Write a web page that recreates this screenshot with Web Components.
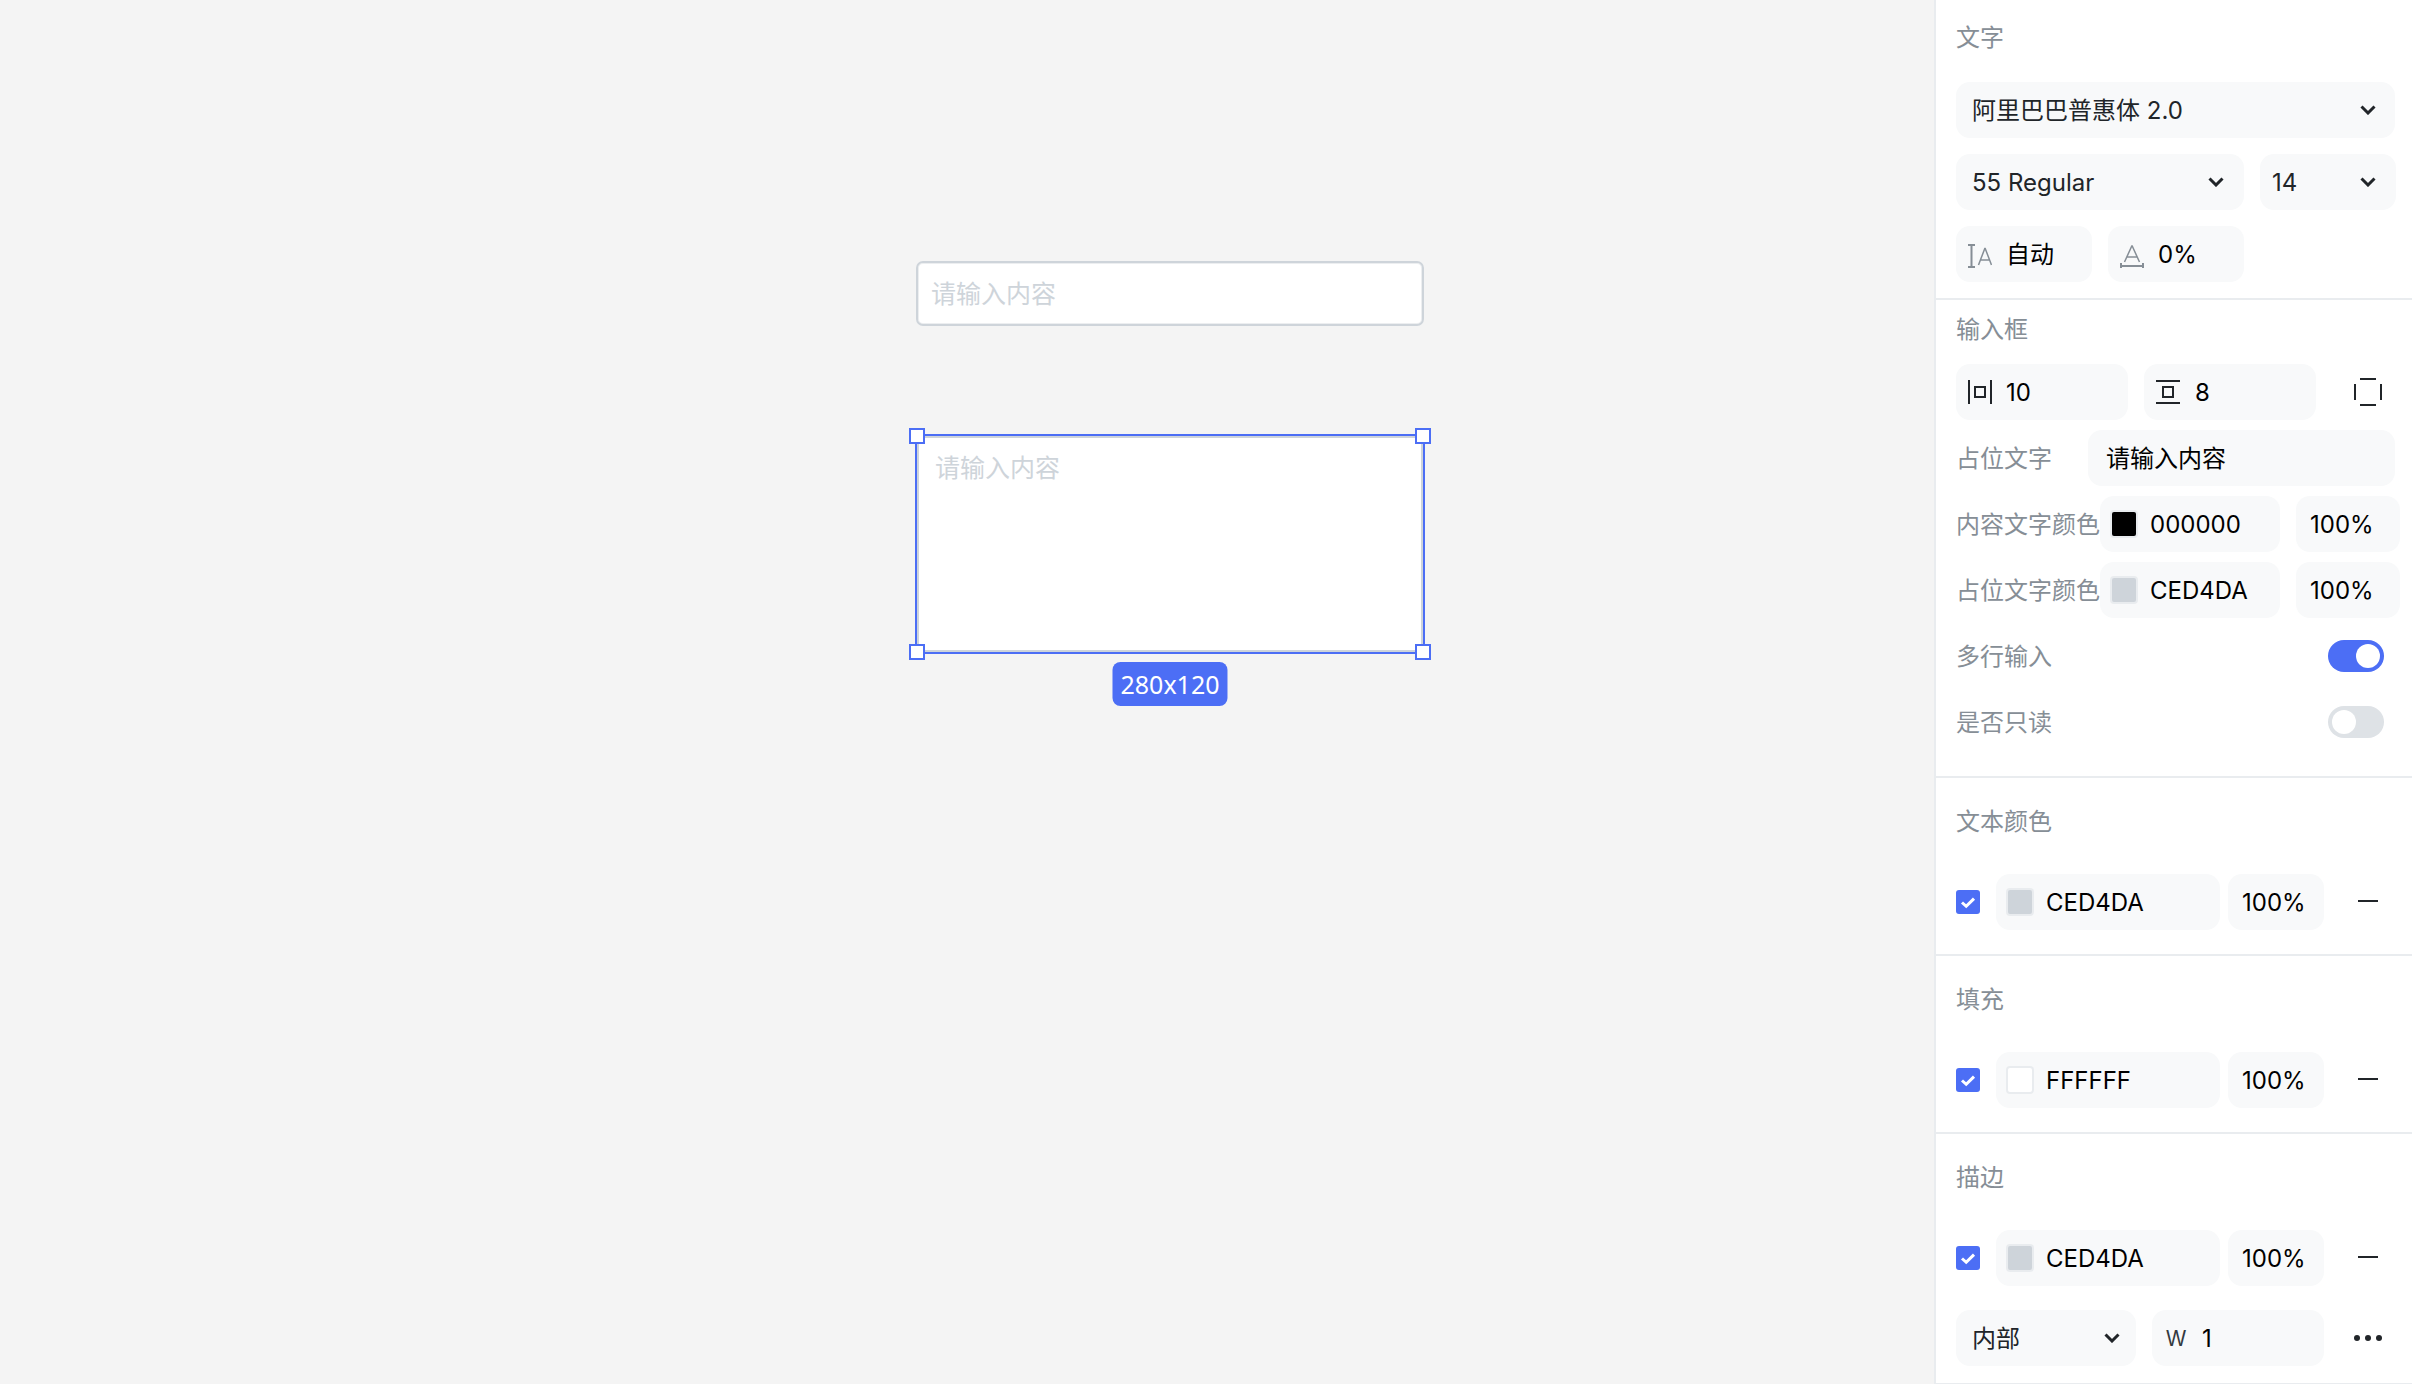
<!DOCTYPE html>
<html lang="zh">
<head>
<meta charset="utf-8">
<title>输入框</title>
<style>
  html, body { margin: 0; height: 100%; overflow: hidden; }
  body { font-family: Inter, "Noto Sans CJK SC", sans-serif; font-size: 24px; color: #212529; }
</style>
</head>
<body>
<ed-app>
  <ed-canvas slot="canvas">
    <ed-node x="916" y="261" w="508" h="65" pad-x="13" pad-y="0" center>请输入内容</ed-node>
    <ed-node x="917" y="436" w="506" h="216" pad-x="16" pad-y="13" selected size="280x120">请输入内容</ed-node>
  </ed-canvas>

  <ed-panel slot="panel">
    <ed-section heading="文字" top="20" under="28" bottom="16">
      <ed-select>阿里巴巴普惠体 2.0</ed-select>
      <ed-row>
        <ed-select style="width:288px" right="20">55 Regular</ed-select>
        <ed-select style="width:136px" pad="12" right="20">14</ed-select>
      </ed-row>
      <ed-row>
        <ed-field style="width:136px" gap="14">
          <svg slot="icon" width="24" height="28" viewBox="0 0 24 28" fill="none" stroke="#868e96" stroke-width="2"><path d="M0 5h7M0 27h7M3.5 5v22"/><path stroke-width="1.5" d="M10.5 25L16.8 8.5h.4L23.5 25M12.7 20h8.6"/></svg>
          自动
        </ed-field>
        <ed-field style="width:136px" gap="14">
          <svg slot="icon" width="24" height="28" viewBox="0 0 24 28" fill="none" stroke="#868e96" stroke-width="2"><path stroke-width="1.5" d="M4.5 22L11.8 6h.4L19.5 22M7 17h10"/><path d="M1 26h22M1 23v5M23 23v5"/></svg>
          0%
        </ed-field>
      </ed-row>
    </ed-section>

    <ed-section heading="输入框" top="12" under="18" bottom="26" gap="10">
      <ed-row>
        <ed-field style="width:172px" gap="14">
          <svg slot="icon" width="24" height="24" viewBox="0 0 24 24" fill="none" stroke="#212529" stroke-width="2"><path d="M1 0v24M23 0v24"/><rect x="7" y="7" width="10" height="10"/></svg>
          10
        </ed-field>
        <ed-field style="width:172px" gap="15">
          <svg slot="icon" width="24" height="24" viewBox="0 0 24 24" fill="none" stroke="#212529" stroke-width="2"><path d="M0 1h24M0 23h24"/><rect x="7" y="7" width="10" height="10"/></svg>
          8
        </ed-field>
        <ed-iconbtn style="margin-left:22px">
          <svg width="28" height="28" viewBox="0 0 28 28" fill="none" stroke="#212529" stroke-width="2"><path d="M6 1h16M6 27h16M1 6v16M27 6v16"/></svg>
        </ed-iconbtn>
      </ed-row>
      <ed-prop label="占位文字" label-width="132">
        <ed-field style="flex:1" pad="18">请输入内容</ed-field>
      </ed-prop>
      <ed-prop label="内容文字颜色" label-width="144">
        <ed-color style="width:180px" color="#000000">000000</ed-color>
        <ed-field style="width:104px;margin-left:16px" pad="14">100%</ed-field>
      </ed-prop>
      <ed-prop label="占位文字颜色" label-width="144">
        <ed-color style="width:180px" color="#ced4da">CED4DA</ed-color>
        <ed-field style="width:104px;margin-left:16px" pad="14">100%</ed-field>
      </ed-prop>
      <ed-prop label="多行输入" spread><ed-toggle on></ed-toggle></ed-prop>
      <ed-prop label="是否只读" spread><ed-toggle></ed-toggle></ed-prop>
    </ed-section>

    <ed-section heading="文本颜色" top="26" under="36" bottom="24">
      <ed-paint color="#ced4da" value="CED4DA"></ed-paint>
    </ed-section>
    <ed-section heading="填充" top="26" under="36" bottom="24">
      <ed-paint color="#ffffff" value="FFFFFF"></ed-paint>
    </ed-section>
    <ed-section heading="描边" top="26" under="36" bottom="17" gap="24">
      <ed-paint color="#ced4da" value="CED4DA"></ed-paint>
      <ed-row>
        <ed-select style="width:180px" right="16">内部</ed-select>
        <ed-field style="width:172px" gap="14">
          <span slot="icon" style="display:block;width:24px;text-align:center;font-size:21px;padding-top:2px;color:#343a40">W</span>
          1
        </ed-field>
        <ed-iconbtn style="margin-left:14px">
          <svg width="28" height="8" viewBox="0 0 28 8" fill="#212529"><circle cx="3" cy="4" r="3"/><circle cx="14" cy="4" r="3"/><circle cx="25" cy="4" r="3"/></svg>
        </ed-iconbtn>
      </ed-row>
    </ed-section>
  </ed-panel>
</ed-app>

<script>
// small helper so each element keeps its markup + styles together
function makeEl(name, html, setup) {
  const tpl = document.createElement('template');
  tpl.innerHTML = html;
  customElements.define(name, class extends HTMLElement {
    constructor() {
      super();
      this.attachShadow({ mode: 'open' });
      this.shadowRoot.appendChild(tpl.content.cloneNode(true));
    }
    connectedCallback() {
      if (setup) setup(this, this.shadowRoot);
    }
  });
}

const CHEVRON = `<svg class="chev" width="16" height="10" viewBox="0 0 16 10" fill="none" stroke="#212529" stroke-width="3"><path d="M1.5 1.5L8 8l6.5-6.5"/></svg>`;

makeEl('ed-app', `
  <style>
    :host { display: flex; width: 2412px; height: 1384px; background: #f4f4f4; }
  </style>
  <slot name="canvas"></slot>
  <slot name="panel"></slot>
`);

makeEl('ed-canvas', `
  <style>
    :host { display: block; position: relative; flex: none; width: 1934px; height: 100%; }
  </style>
  <slot></slot>
`);

// nodes sit on a free canvas, so x/y are the content here
makeEl('ed-node', `
  <style>
    :host { display: block; position: absolute; box-sizing: border-box; background: #fff; border: 2px solid #ced4da; border-radius: 7px; color: #ced4da; font-size: 25px; line-height: 34px; box-shadow: inset 0 0 0 1px #eceef0; }
    :host([selected]) { border-radius: 0; box-shadow: none; }
    :host([center]) .txt { height: 100%; display: flex; align-items: center; }
    .frame { position: absolute; inset: -4px; border: 2px solid #4c6ef5; }
    .h { position: absolute; box-sizing: border-box; width: 16px; height: 16px; background: #fff; border: 2px solid #4c6ef5; }
    .tl { left: -10px; top: -10px; } .tr { right: -10px; top: -10px; }
    .bl { left: -10px; bottom: -10px; } .br { right: -10px; bottom: -10px; }
    .size { position: absolute; left: 50%; top: calc(100% + 12px); transform: translateX(-50%); height: 44px; line-height: 44px; padding: 0 8px; border-radius: 8px; background: #4c6ef5; color: #fff; font-family: "Noto Sans", sans-serif; font-size: 25px; white-space: nowrap; }
  </style>
  <div class="txt"><slot></slot></div>
`, (el, root) => {
  el.style.left = el.getAttribute('x') + 'px';
  el.style.top = el.getAttribute('y') + 'px';
  el.style.width = el.getAttribute('w') + 'px';
  el.style.height = el.getAttribute('h') + 'px';
  const txt = root.querySelector('.txt');
  txt.style.padding = el.getAttribute('pad-y') + 'px ' + el.getAttribute('pad-x') + 'px';
  txt.style.boxSizing = 'border-box';
  if (el.hasAttribute('selected')) {
    root.innerHTML += `<div class="frame"></div>
      <div class="h tl"></div><div class="h tr"></div><div class="h bl"></div><div class="h br"></div>
      <div class="size">${el.getAttribute('size')}</div>`;
  }
});

makeEl('ed-panel', `
  <style>
    :host { display: flex; flex-direction: column; flex: none; box-sizing: border-box; width: 478px; height: 100%; background: #fff; border-left: 2px solid #e9ecef; }
  </style>
  <slot></slot>
`);

makeEl('ed-section', `
  <style>
    :host { display: block; box-sizing: border-box; padding-left: 20px; padding-right: 17px; border-bottom: 2px solid #e9ecef; }
    .title { box-sizing: border-box; height: 34px; padding-top: 1px; line-height: 34px; color: #868e96; font-size: 24px; }
    .body { display: flex; flex-direction: column; gap: var(--gap, 16px); }
  </style>
  <div class="title"></div>
  <div class="body"><slot></slot></div>
`, (el, root) => {
  const title = root.querySelector('.title');
  title.textContent = el.getAttribute('heading');
  title.style.marginBottom = el.getAttribute('under') + 'px';
  el.style.paddingTop = el.getAttribute('top') + 'px';
  el.style.paddingBottom = el.getAttribute('bottom') + 'px';
  if (el.hasAttribute('gap')) el.style.setProperty('--gap', el.getAttribute('gap') + 'px');
});

makeEl('ed-row', `
  <style>
    :host { display: flex; align-items: center; gap: 16px; height: 56px; }
  </style>
  <slot></slot>
`);

makeEl('ed-select', `
  <style>
    :host { display: flex; align-items: center; justify-content: space-between; box-sizing: border-box; height: 56px; padding: 0 19px 0 16px; background: #f8f9fa; border-radius: 14px; flex: none; line-height: 34px; color: #212529; white-space: nowrap; }
    span { padding-top: 2px; }
    .chev { display: block; flex: none; }
  </style>
  <span><slot></slot></span>
  ${CHEVRON}
`, (el) => {
  if (el.hasAttribute('pad')) el.style.paddingLeft = el.getAttribute('pad') + 'px';
  if (el.hasAttribute('right')) el.style.paddingRight = el.getAttribute('right') + 'px';
});

makeEl('ed-field', `
  <style>
    :host { display: flex; align-items: center; gap: 12px; box-sizing: border-box; height: 56px; padding: 0 12px; background: #f8f9fa; border-radius: 14px; flex: none; line-height: 34px; color: #000; white-space: nowrap; }
    .val { padding-top: 2px; }
    ::slotted(svg) { display: block; flex: none; }
  </style>
  <slot name="icon"></slot>
  <span class="val"><slot></slot></span>
`, (el) => {
  if (el.hasAttribute('pad')) el.style.paddingLeft = el.getAttribute('pad') + 'px';
  if (el.hasAttribute('gap')) el.style.gap = el.getAttribute('gap') + 'px';
});

makeEl('ed-color', `
  <style>
    :host { display: flex; align-items: center; gap: 12px; box-sizing: border-box; height: 56px; padding: 0 10px; background: #f8f9fa; border-radius: 14px; flex: none; line-height: 34px; color: #000; }
    .sw { box-sizing: border-box; width: 28px; height: 28px; border: 2px solid #e9ecef; border-radius: 4px; flex: none; }
    .val { padding-top: 2px; }
  </style>
  <div class="sw"></div>
  <span class="val"><slot></slot></span>
`, (el, root) => {
  root.querySelector('.sw').style.background = el.getAttribute('color');
});

makeEl('ed-iconbtn', `
  <style>
    :host { display: flex; align-items: center; justify-content: center; width: 28px; flex: none; }
    ::slotted(svg) { display: block; }
  </style>
  <slot></slot>
`);

makeEl('ed-prop', `
  <style>
    :host { display: flex; align-items: center; height: 56px; }
    :host([spread]) { justify-content: space-between; padding-right: 11px; }
    .lbl { box-sizing: border-box; padding-top: 2px; color: #868e96; line-height: 34px; flex: none; white-space: nowrap; }
  </style>
  <div class="lbl"></div>
  <slot></slot>
`, (el, root) => {
  const lbl = root.querySelector('.lbl');
  lbl.textContent = el.getAttribute('label');
  if (el.hasAttribute('label-width')) lbl.style.width = el.getAttribute('label-width') + 'px';
});

makeEl('ed-toggle', `
  <style>
    :host { display: block; box-sizing: border-box; width: 56px; height: 32px; padding: 4px; border-radius: 16px; background: #dee2e6; }
    :host([on]) { background: #4c6ef5; }
    .knob { width: 24px; height: 24px; border-radius: 50%; background: #fff; }
    :host([on]) .knob { margin-left: 24px; }
  </style>
  <div class="knob"></div>
`);

makeEl('ed-paint', `
  <style>
    :host { display: flex; align-items: center; height: 56px; }
    .check { display: block; flex: none; margin-right: 16px; }
    .pct { width: 96px; margin-left: 8px; }
    .minus { display: block; flex: none; margin: -2px 0 0 34px; }
  </style>
  <svg class="check" width="24" height="24" viewBox="0 0 24 24"><rect width="24" height="24" rx="3" fill="#4c6ef5"/><path d="M6 12.5l4.2 3.8L18 8.6" fill="none" stroke="#fff" stroke-width="3"/></svg>
  <ed-color style="width:224px"></ed-color>
  <ed-field class="pct" pad="14">100%</ed-field>
  <svg class="minus" width="20" height="2" viewBox="0 0 20 2"><rect width="20" height="2" fill="#212529" /></svg>
`, (el, root) => {
  const c = root.querySelector('ed-color');
  c.setAttribute('color', el.getAttribute('color'));
  c.shadowRoot.querySelector('.sw').style.background = el.getAttribute('color');
  c.textContent = el.getAttribute('value');
});
</script>
</body>
</html>
